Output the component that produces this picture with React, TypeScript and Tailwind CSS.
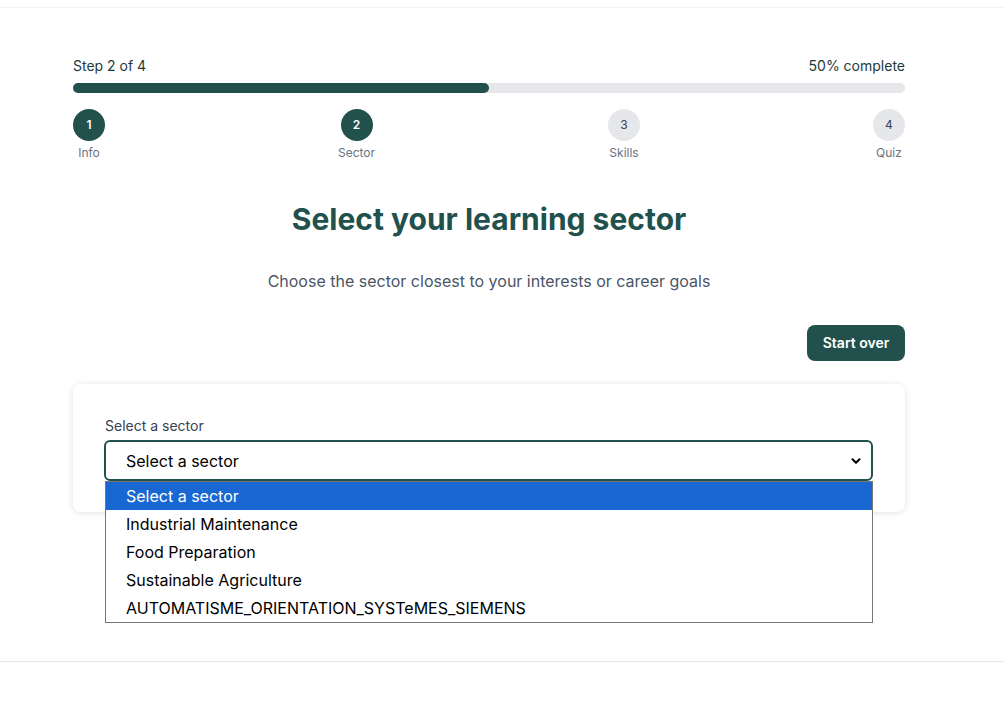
import { ChevronDown } from 'lucide-react';

const STEPS = [
  { n: 1, label: 'Info', done: true },
  { n: 2, label: 'Sector', done: true },
  { n: 3, label: 'Skills', done: false },
  { n: 4, label: 'Quiz', done: false },
];

const OPTIONS = [
  'Select a sector',
  'Industrial Maintenance',
  'Food Preparation',
  'Sustainable Agriculture',
  'AUTOMATISME_ORIENTATION_SYSTeMES_SIEMENS',
];

export default function App() {
  return (
    <div className="min-h-[726px] bg-white font-['Inter',sans-serif]">
      <div className="h-[8px] border-b border-gray-100 bg-white" />

      <main className="ml-[73px] w-[832px] pt-[48px]">
        {/* progress */}
        <div className="flex items-center justify-between text-sm leading-5 text-[#1e3a3a]">
          <span>Step 2 of 4</span>
          <span>50% complete</span>
        </div>
        <div className="mt-[7px] h-[10px] w-full rounded-full bg-[#e5e7eb]">
          <div className="h-full w-1/2 rounded-full bg-[#22514d]" />
        </div>

        <div className="mt-[16px] flex justify-between">
          {STEPS.map((s) => (
            <div key={s.n} className="flex flex-col items-center">
              <div
                className={`flex h-8 w-8 items-center justify-center rounded-full text-xs ${
                  s.done ? 'bg-[#22514d] font-semibold text-white' : 'bg-[#e5e7eb] text-gray-700'
                }`}
              >
                {s.n}
              </div>
              <span className="mt-[4px] text-xs leading-4 text-gray-500">{s.label}</span>
            </div>
          ))}
        </div>

        {/* heading */}
        <h1 className="mt-[40px] text-center text-[30px] font-bold leading-9 text-[#22514d]">
          Select your learning sector
        </h1>
        <p className="mt-[32px] text-center text-base leading-6 text-gray-600">
          Choose the sector closest to your interests or career goals
        </p>

        <div className="mt-[32px] flex justify-end">
          <button
            type="button"
            className="h-[36px] w-[98px] rounded-lg bg-[#22514d] text-sm font-semibold text-white"
          >
            Start over
          </button>
        </div>

        {/* card */}
        <div className="mt-[23px] rounded-lg bg-white px-8 pb-[31px] pt-[32px] shadow-[0_1px_6px_rgba(0,0,0,0.12)]">
          <div className="mb-[4px] text-sm leading-5 text-gray-700">Select a sector</div>
          <div className="relative">
            <div className="-ml-px flex h-[41px] items-center justify-between rounded-md border-2 border-[#22514d] pl-[20px] pr-[8px] text-base text-black">
              <span>Select a sector</span>
              <ChevronDown className="h-[14px] w-[14px]" strokeWidth={3.5} />
            </div>

            {/* open native list */}
            <ul className="absolute left-0 right-0 top-[41px] z-10 border border-[#767676] bg-white">
              {OPTIONS.map((o, i) => (
                <li
                  key={o}
                  className={`h-[28px] pl-[20px] text-base leading-[28px] ${
                    i === 0 ? 'bg-[#1967d2] text-white' : 'text-black'
                  }`}
                >
                  {o}
                </li>
              ))}
            </ul>
          </div>
        </div>
      </main>

      <div className="mt-[149px] border-t border-gray-200" />
    </div>
  );
}
